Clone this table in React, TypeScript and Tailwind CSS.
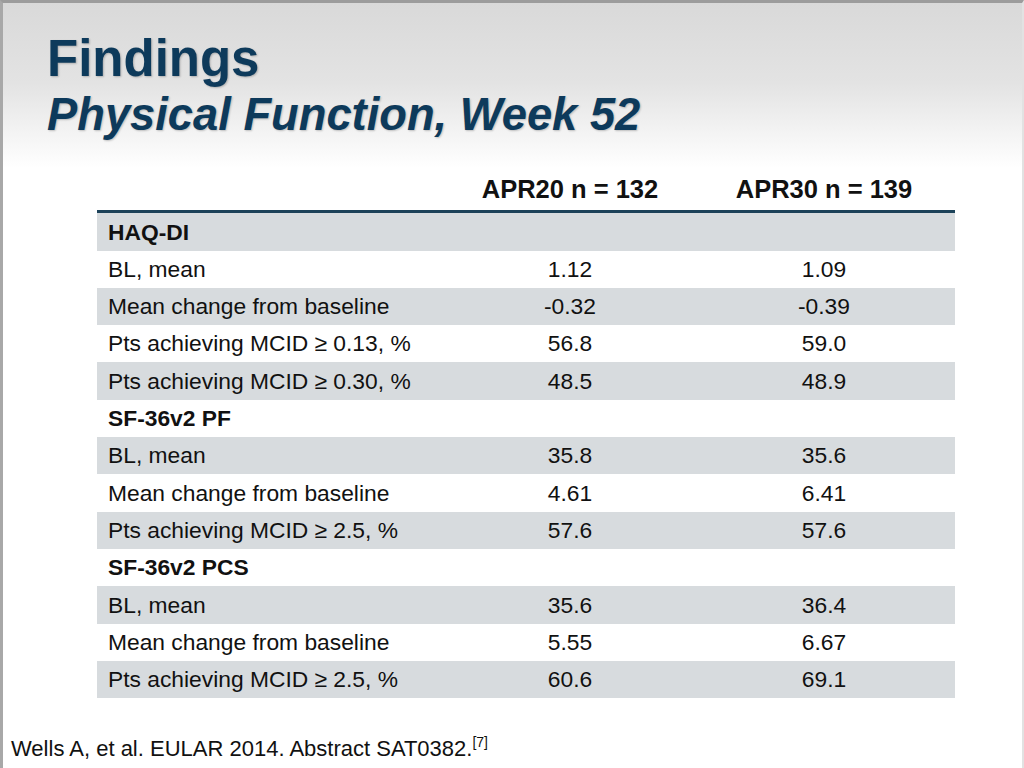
import React from "react";

type Row = {
  label: string;
  a?: string;
  b?: string;
  section?: boolean;
};

// table rows, top to bottom; shading alternates starting with grey
const rows: Row[] = [
  { label: "HAQ-DI", section: true },
  { label: "BL, mean", a: "1.12", b: "1.09" },
  { label: "Mean change from baseline", a: "-0.32", b: "-0.39" },
  { label: "Pts achieving MCID \u2265 0.13, %", a: "56.8", b: "59.0" },
  { label: "Pts achieving MCID \u2265 0.30, %", a: "48.5", b: "48.9" },
  { label: "SF-36v2 PF", section: true },
  { label: "BL, mean", a: "35.8", b: "35.6" },
  { label: "Mean change from baseline", a: "4.61", b: "6.41" },
  { label: "Pts achieving MCID \u2265 2.5, %", a: "57.6", b: "57.6" },
  { label: "SF-36v2 PCS", section: true },
  { label: "BL, mean", a: "35.6", b: "36.4" },
  { label: "Mean change from baseline", a: "5.55", b: "6.67" },
  { label: "Pts achieving MCID \u2265 2.5, %", a: "60.6", b: "69.1" },
];

const App = () => {
  return (
    <div
      className="w-[1024px] h-[768px] overflow-hidden border-t-[3px] border-l-[3px] border-r-2 border-t-[#9c9c9c] border-l-[#a8a8a8] border-r-[#e2e2e2] bg-[linear-gradient(to_bottom,#d9d9d9_0px,#e3e3e3_80px,#ffffff_165px)] text-[#111]"
      style={{ fontFamily: '"Liberation Sans", Arial, sans-serif' }}
    >
      {/* Title */}
      <div className="pl-[44px] pt-[30px] text-[#0d3a5b] font-bold [text-shadow:1px_1px_2px_rgba(0,0,0,0.22)]">
        <h1 className="text-[51px] leading-none">Findings</h1>
        <h2 className="mt-[8px] text-[45.3px] leading-none italic">
          Physical Function, Week 52
        </h2>
      </div>

      {/* Table */}
      <div className="ml-[94px] mt-[34px] w-[858px]">
        <div className="grid grid-cols-[350px_246px_262px] pt-[6px] pb-[8px] text-[25.5px] leading-[25px] font-bold">
          <div />
          <div className="text-center">APR20 n = 132</div>
          <div className="text-center">APR30 n = 139</div>
        </div>
        <div className="h-[3px] bg-[#1c4259]" />
        {rows.map((row, i) => (
          <div
            key={i}
            className={`grid grid-cols-[350px_246px_262px] h-[37.3px] items-center text-[22.8px] leading-none ${
              i % 2 === 0 ? "bg-[#d7dbde]" : "bg-white"
            }`}
          >
            <div className={`pl-[11px] ${row.section ? "font-bold" : ""}`}>
              {row.label}
            </div>
            <div className="text-center">{row.a}</div>
            <div className="text-center">{row.b}</div>
          </div>
        ))}
      </div>

      {/* Reference */}
      <div className="pl-[8px] mt-[40px] text-[22px] leading-none">
        Wells A, et al. EULAR 2014. Abstract SAT0382.
        <span className="text-[14px] align-top relative -top-[3px]">[7]</span>
      </div>
    </div>
  );
};

export default App;
